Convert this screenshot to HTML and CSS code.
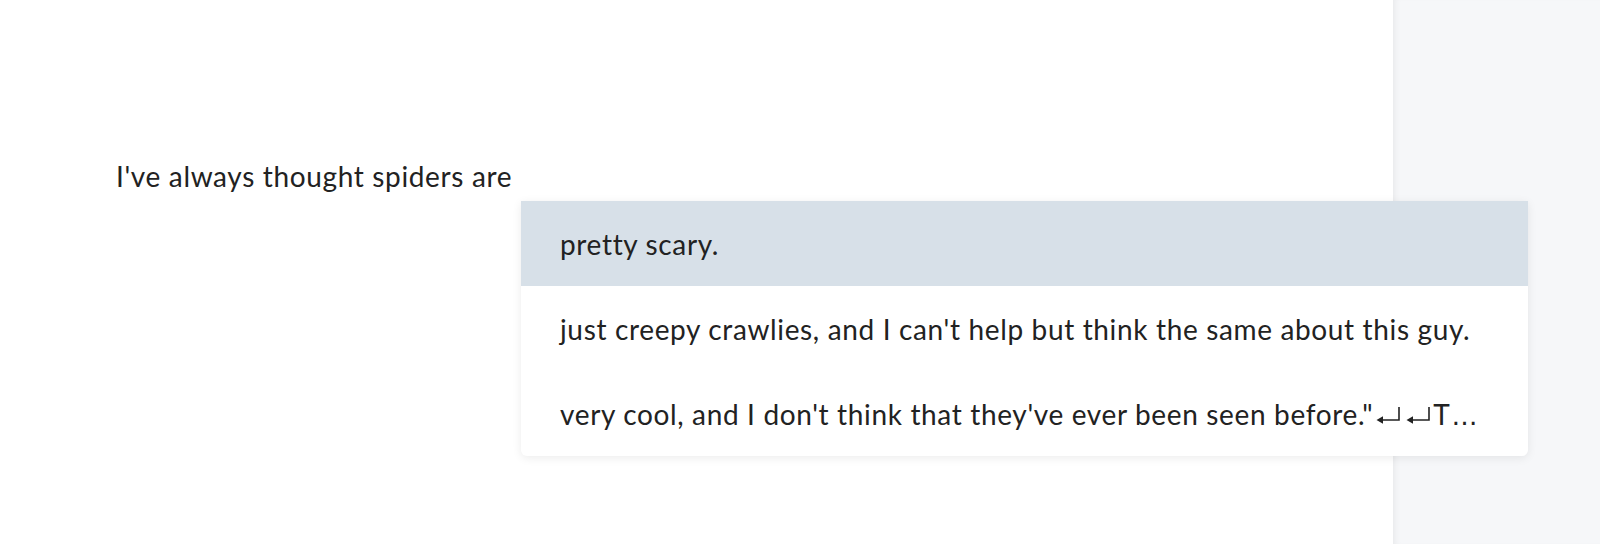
FILE: index.html
```html
<!DOCTYPE html>
<html>
<head>
<meta charset="utf-8">
<link rel="stylesheet" href="styles.css">
</head>
<body>
<div class="app">
  <main class="editor">
    <p class="prompt">I've always thought spiders are</p>
    <ul class="suggestions">
      <li class="item active">pretty scary.</li>
      <li class="item">just creepy crawlies, and I can't help but think the same about this guy.</li>
      <li class="item"><span>very cool, and I don't think that they've ever been seen before."<span class="rets"><svg class="ret" viewBox="0 0 24 20" aria-label="↵"><path d="M23 1v13H4" fill="none" stroke="#222" stroke-width="1.6"/><path d="M0.5 14L7 10.2V17.8Z" fill="#222"/></svg><svg class="ret" viewBox="0 0 24 20" aria-label="↵"><path d="M23 1v13H4" fill="none" stroke="#222" stroke-width="1.6"/><path d="M0.5 14L7 10.2V17.8Z" fill="#222"/></svg></span>T<span class="sym">…</span></span></li>
    </ul>
  </main>
  <aside class="sidebar"></aside>
</div>
</body>
</html>
```

FILE: styles.css
```css
html, body {
  margin: 0;
  padding: 0;
  height: 100%;
}
body {
  font-family: Lato, "Open Sans", sans-serif;
  color: #222;
  background: #fff;
}
.app {
  display: flex;
  height: 544px;
  overflow: hidden;
}
.editor {
  position: relative;
  width: 1393px;
  flex: none;
  background: #fff;
}
.prompt {
  margin: 0;
  padding: 156px 0 0 116px;
  font-size: 28px;
  letter-spacing: 0.65px;
  line-height: 40px;
  color: #222;
}
.sidebar {
  flex: 1;
  background: #f6f7f9;
  box-shadow: inset 6px 0 6px -4px rgba(0,0,0,0.06);
}
.suggestions {
  position: absolute;
  left: 521px;
  top: 201px;
  width: 1007px;
  margin: 0;
  padding: 0;
  list-style: none;
  background: #fff;
  border-radius: 0 0 6px 6px;
  box-shadow: 0 2px 10px rgba(0,0,0,0.08);
  z-index: 2;
}
.item {
  height: 85px;
  display: flex;
  align-items: center;
  padding: 0 0 0 39px;
  font-size: 28px;
  letter-spacing: 0.65px;
  color: #222;
  white-space: nowrap;
}
.item.active {
  background: #d7e0e8;
}
.rets {
  letter-spacing: 0;
  display: inline-flex;
  gap: 6px;
  margin: 0 3px 0 3px;
  vertical-align: -1px;
}
.ret {
  width: 24px;
  height: 20px;
  display: block;
}
.sym {
  font-family: "DejaVu Sans", sans-serif;
  font-size: 26px;
  letter-spacing: 0;
  padding: 0 1px;
}
```
